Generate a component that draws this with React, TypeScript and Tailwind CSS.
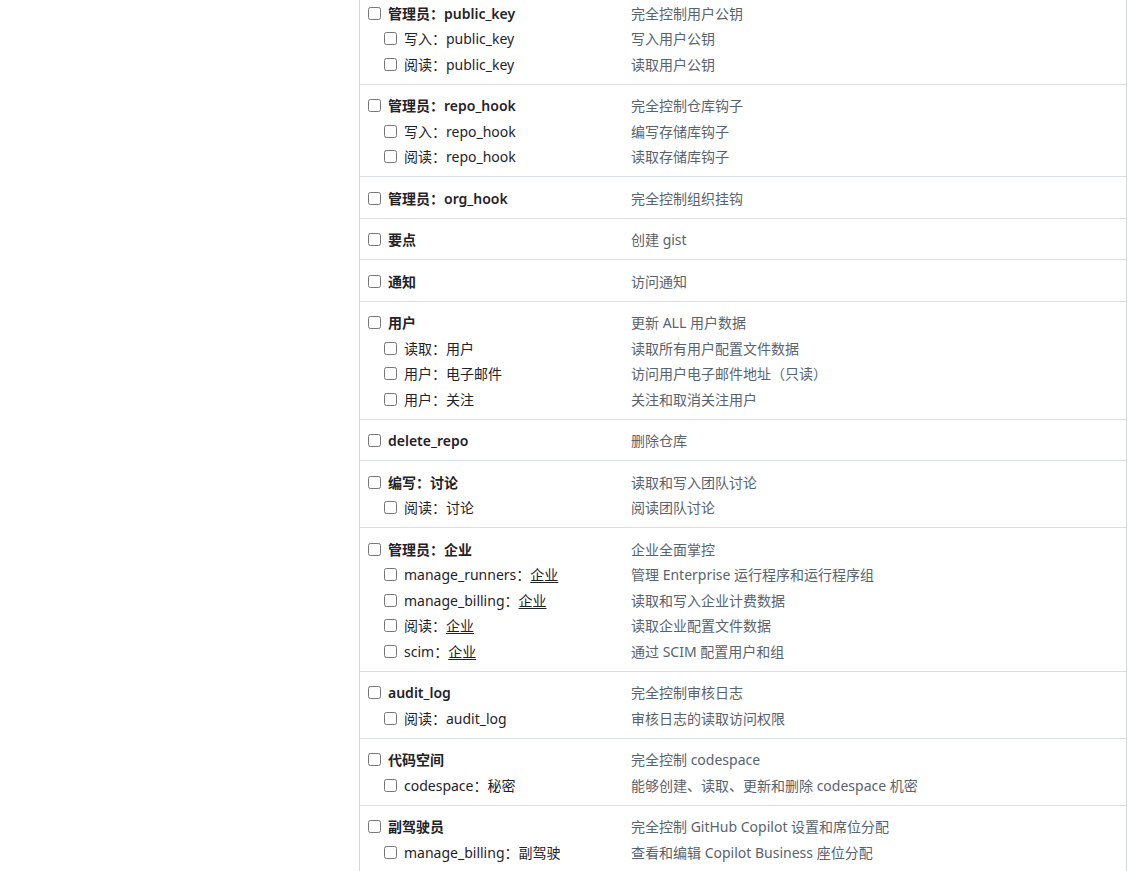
type Row = { label: string; link?: string; desc: string };

const GROUPS: Row[][] = [
  [
    { label: '管理员：public_key', desc: '完全控制用户公钥' },
    { label: '写入：public_key', desc: '写入用户公钥' },
    { label: '阅读：public_key', desc: '读取用户公钥' },
  ],
  [
    { label: '管理员：repo_hook', desc: '完全控制仓库钩子' },
    { label: '写入：repo_hook', desc: '编写存储库钩子' },
    { label: '阅读：repo_hook', desc: '读取存储库钩子' },
  ],
  [{ label: '管理员：org_hook', desc: '完全控制组织挂钩' }],
  [{ label: '要点', desc: '创建 gist' }],
  [{ label: '通知', desc: '访问通知' }],
  [
    { label: '用户', desc: '更新 ALL 用户数据' },
    { label: '读取：用户', desc: '读取所有用户配置文件数据' },
    { label: '用户：电子邮件', desc: '访问用户电子邮件地址（只读）' },
    { label: '用户：关注', desc: '关注和取消关注用户' },
  ],
  [{ label: 'delete_repo', desc: '删除仓库' }],
  [
    { label: '编写：讨论', desc: '读取和写入团队讨论' },
    { label: '阅读：讨论', desc: '阅读团队讨论' },
  ],
  [
    { label: '管理员：企业', desc: '企业全面掌控' },
    { label: 'manage_runners：', link: '企业', desc: '管理 Enterprise 运行程序和运行程序组' },
    { label: 'manage_billing：', link: '企业', desc: '读取和写入企业计费数据' },
    { label: '阅读：', link: '企业', desc: '读取企业配置文件数据' },
    { label: 'scim：', link: '企业', desc: '通过 SCIM 配置用户和组' },
  ],
  [
    { label: 'audit_log', desc: '完全控制审核日志' },
    { label: '阅读：audit_log', desc: '审核日志的读取访问权限' },
  ],
  [
    { label: '代码空间', desc: '完全控制 codespace' },
    { label: 'codespace：秘密', desc: '能够创建、读取、更新和删除 codespace 机密' },
  ],
  [
    { label: '副驾驶员', desc: '完全控制 GitHub Copilot 设置和席位分配' },
    { label: 'manage_billing：副驾驶', desc: '查看和编辑 Copilot Business 座位分配' },
  ],
];

function ScopeRow({ row, child }: { row: Row; child: boolean }) {
  return (
    <div className="flex h-[25.5px] items-center">
      <div className={`flex w-[263px] shrink-0 items-center ${child ? 'pl-[16px]' : ''}`}>
        <input type="checkbox" className="m-0 h-[13px] w-[13px] shrink-0" />
        <span
          className={`ml-[7px] whitespace-nowrap text-[#1f2328] ${child ? 'font-normal' : 'font-semibold'}`}
        >
          {row.label}
          {row.link && <span className="underline underline-offset-2">{row.link}</span>}
        </span>
      </div>
      <span className="whitespace-nowrap text-[#59636e]">{row.desc}</span>
    </div>
  );
}

export default function App() {
  return (
    <div
      className="flex h-[871px] overflow-hidden bg-white text-[14px]"
      style={{ fontFamily: '"Noto Sans", "Noto Sans CJK SC", sans-serif' }}
    >
      <div className="w-[359px] shrink-0" />
      <div className="-mt-[8px] w-[768px] shrink-0 self-start border-x border-[#d0d7de]">
        {GROUPS.map((group, gi) => (
          <div key={gi} className="border-b border-[#d8dee4] pt-[8.5px] pb-[6.5px] pl-[8px]">
            {group.map((row, ri) => (
              <ScopeRow key={ri} row={row} child={ri > 0} />
            ))}
          </div>
        ))}
      </div>
    </div>
  );
}
